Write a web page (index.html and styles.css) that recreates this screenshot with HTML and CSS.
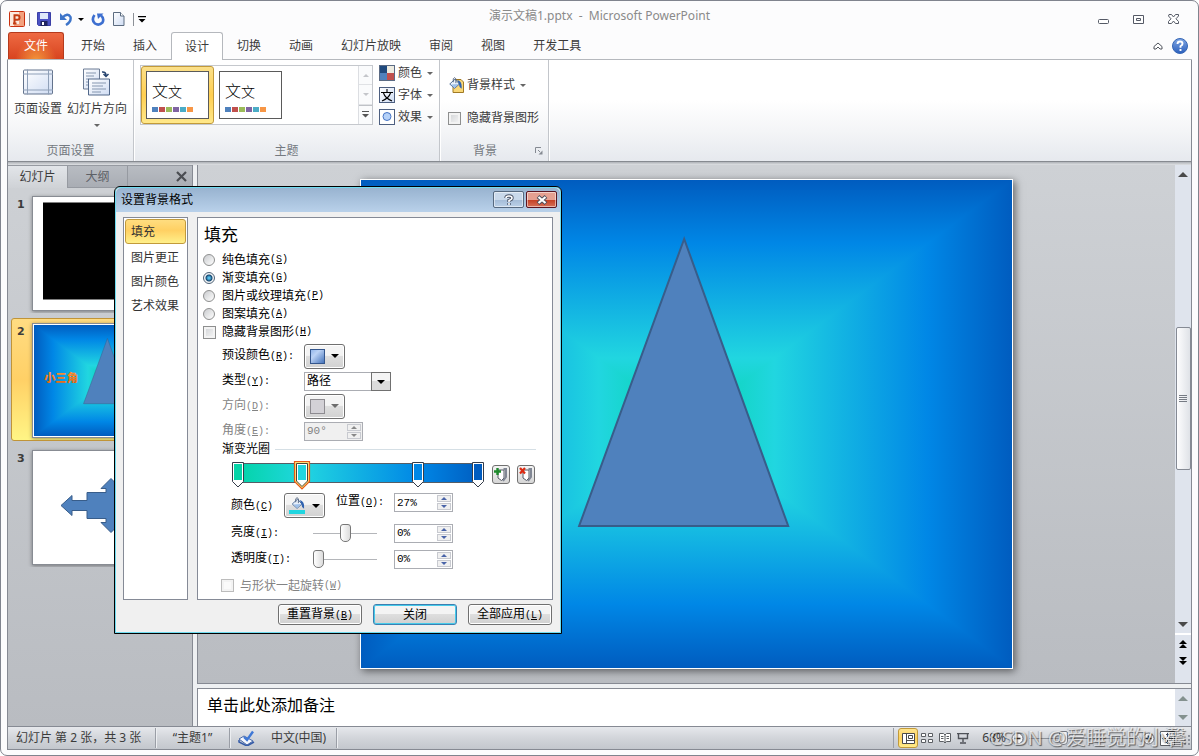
FILE: index.html
```html
<!DOCTYPE html>
<html lang="zh-CN">
<head>
<meta charset="utf-8">
<title>演示文稿1.pptx - Microsoft PowerPoint</title>
<link rel="stylesheet" href="styles.css">
</head>
<body>
<svg class="defs" width="0" height="0" aria-hidden="true">
  <defs>
    <linearGradient id="gh" x1="0" x2="1" y1="0" y2="0">
      <stop offset="0" stop-color="#005cbf"/><stop offset=".13" stop-color="#0087e6"/><stop offset=".365" stop-color="#21d6e0"/><stop offset=".5" stop-color="#03d4a8"/><stop offset=".635" stop-color="#21d6e0"/><stop offset=".87" stop-color="#0087e6"/><stop offset="1" stop-color="#005cbf"/>
    </linearGradient>
    <linearGradient id="gv" x1="0" x2="0" y1="0" y2="1">
      <stop offset="0" stop-color="#005cbf"/><stop offset=".13" stop-color="#0087e6"/><stop offset=".365" stop-color="#21d6e0"/><stop offset=".5" stop-color="#03d4a8"/><stop offset=".635" stop-color="#21d6e0"/><stop offset=".87" stop-color="#0087e6"/><stop offset="1" stop-color="#005cbf"/>
    </linearGradient>
    <linearGradient id="word" x1="0" x2="0" y1="0" y2="1"><stop offset="0" stop-color="#ff9a3c"/><stop offset="1" stop-color="#e4600a"/></linearGradient>
    <linearGradient id="page" x1="0" x2="1" y1="0" y2="1"><stop offset="0" stop-color="#fff"/><stop offset="1" stop-color="#cfdcf3"/></linearGradient>
    <linearGradient id="ball" x1="0" x2="0" y1="0" y2="1"><stop offset="0" stop-color="#7fa6e3"/><stop offset="1" stop-color="#2b5fbd"/></linearGradient>
    <linearGradient id="swatch" x1="0" x2="1" y1="0" y2="1"><stop offset="0" stop-color="#8fb4ea"/><stop offset=".35" stop-color="#bcd3f5"/><stop offset="1" stop-color="#3f6fb8"/></linearGradient>
    <linearGradient id="ramp" x1="0" x2="1" y1="0" y2="0"><stop offset="0" stop-color="#03d4a8"/><stop offset=".27" stop-color="#21d6e0"/><stop offset=".74" stop-color="#0087e6"/><stop offset="1" stop-color="#005cbf"/></linearGradient>
    <symbol id="slide-two" viewBox="0 0 651 488">
      <rect width="651" height="488" fill="url(#gv)"/>
      <path d="M0 0L651 488V0L0 488Z" fill="url(#gh)"/>
      <text x="44" y="252" class="wordart" fill="url(#word)">小三角</text>
      <path d="M323 59L218 346H427Z" fill="#4f81bd" stroke="#385d8a" stroke-width="2"/>
    </symbol>
    <symbol id="bucket" viewBox="0 0 16 16">
      <path d="M2 8L8 2.500L13 8L7.500 13Z" fill="#e9f1fb" stroke="#3f6291"/>
      <path d="M3.500 8.500L12 8L7.500 12.500Z" fill="#9ec0ea"/>
      <path d="M6 6V2Q7.500 -.5 9 2V7" fill="none" stroke="#4c5d78"/>
      <path d="M10.500 3.500Q16.500 4.500 15.500 13.500Q12.500 12 12.500 8Z" fill="#2f62b0"/>
    </symbol>
  </defs>
</svg>

<div class="window">
  <header class="titlebar">
    <div class="quick">
      <svg class="app" width="16" height="16" viewBox="0 0 16 16"><rect x=".5" y=".5" width="15" height="15" rx="1" fill="#fde9de" stroke="#c9300f"/><path d="M10 1h5v14H5v-2h5z" fill="#f3a27f"/><path d="M5.500 13V4.200H8.500Q10.500 4.200 10.500 6.500T8.500 8.800H5.500M4 12.500H7.500" fill="none" stroke="#c43c12" stroke-width="2"/></svg>
      <span class="rule"></span>
      <button aria-label="保存"><svg width="14" height="14" viewBox="0 0 14 14"><path d="M.5 .5H13.500V13.500H1.500L.5 12.500Z" fill="#4b52c4" stroke="#3a3fa6"/><path d="M3 1h8v6H3z" fill="#dfe9fa"/><path d="M3.500 9h7v5h-7z" fill="#20245e"/><path d="M5 10h2v3H5z" fill="#fff"/></svg></button>
      <button class="undo" aria-label="撤消"><svg width="14" height="14" viewBox="0 0 14 14"><path d="M3 6Q9 0 11.500 5Q12.500 9.500 7 13" fill="none" stroke="#3d74c9" stroke-width="2.400"/><path d="M1 1V8H8Z" fill="#3d74c9"/></svg><i class="tri ink"></i></button>
      <button class="redo" aria-label="重复"><svg width="14" height="14" viewBox="0 0 14 14"><path d="M3.500 3Q0 8 4 11.500Q8 14 11.500 10.500Q13.500 6.500 10 3.500" fill="none" stroke="#3d6fd0" stroke-width="2.600"/><path d="M6 1.500H12.500L7 7Z" fill="#3d6fd0"/></svg></button>
      <button class="new" aria-label="新建"><svg width="12" height="14" viewBox="0 0 12 14"><path d="M.5 .5H7.500L11 4V13.500H.5Z" fill="url(#page)" stroke="#5c6c80"/><path d="M7.500 .5V4H11" fill="#fff" stroke="#5c6c80"/></svg></button>
      <span class="rule last"></span>
      <button class="more" aria-label="自定义快速访问工具栏"><svg width="8" height="7" viewBox="0 0 8 7"><path d="M0 0H8V1.200H0ZM.5 3H7.500L4 6.500Z" fill="#000"/></svg></button>
    </div>
    <h1 class="caption">演示文稿1.pptx&nbsp; -&nbsp; Microsoft PowerPoint</h1>
    <div class="controls">
      <button aria-label="最小化"><svg width="12" height="12" viewBox="0 0 12 12"><rect x=".5" y="6.500" width="10" height="4" rx="1" fill="#fff" stroke="#555a66"/></svg></button>
      <button aria-label="还原"><svg width="12" height="12" viewBox="0 0 12 12"><path d="M.5 2.500H10.500V10.500H.5ZM3.500 5.500V7.500H7.500V5.500Z" fill="#fff" stroke="#555a66"/></svg></button>
      <button aria-label="关闭"><svg width="12" height="12" viewBox="0 0 12 12"><path d="M1 1.500H3.500L5.500 4L7.500 1.500H10.500V3L8 5.800L10.500 8.500V10.500H7.500L5.500 8L3.500 10.500H.5V8.500L3 5.800L.5 3Z" fill="#fff" stroke="#555a66"/></svg></button>
    </div>
  </header>

  <nav class="tabs">
    <button class="tab file">文件</button>
    <button class="tab">开始</button><button class="tab">插入</button><button class="tab active">设计</button><button class="tab">切换</button><button class="tab">动画</button><button class="tab">幻灯片放映</button><button class="tab">审阅</button><button class="tab">视图</button><button class="tab">开发工具</button>
    <div class="tabs-end">
      <button aria-label="功能区最小化"><svg width="10" height="8" viewBox="0 0 10 8"><path d="M5 1L9 4.500V7H7L5 5L3 7H1V4.500Z" fill="#fff" stroke="#4e535c"/></svg></button>
      <button aria-label="帮助"><svg width="16" height="16" viewBox="0 0 16 16"><circle cx="8" cy="8" r="7.500" fill="url(#ball)" stroke="#3566b5"/><path d="M5.500 6Q5.500 3.500 8 3.500T10.500 5.800Q10.500 7 8.500 8.200V9.700M8.500 11V13" fill="none" stroke="#fff" stroke-width="1.900"/></svg></button>
    </div>
  </nav>

  <main class="body">
    <section class="ribbon">
      <div class="group setup">
        <div class="group-main">
          <button class="big"><svg width="32" height="27" viewBox="0 0 32 27"><rect x="1.500" y="1.500" width="29" height="24" rx="1" fill="url(#page)" stroke="#63738c"/><path d="M5.500 1V26M26.500 1V26M1 5.500H31M1 21.500H31" stroke="#8fa0b8"/></svg><span>页面设置</span></button>
          <button class="big"><svg width="30" height="29" viewBox="0 0 30 29"><path d="M1.500 1.500H17.500V21.500H1.500Z" fill="url(#page)" stroke="#6b7b94"/><path d="M4 5.500H14M4 8.500H12M4 11.500H7M4 14.500H7M4 17.500H7" stroke="#8697b0"/><path d="M6.500 11.500H27.500V27.500H6.500Z" fill="url(#page)" stroke="#52688a"/><path d="M10 15.500H24M10 18.500H21M10 21.500H24M10 24.500H19" stroke="#8697b0"/><path d="M20 4.500Q24 4 24 8M21.500 6.500L24 9L26.500 6.500" fill="none" stroke="#27446f" stroke-width="1.500"/></svg><span>幻灯片方向</span><i class="tri"></i></button>
        </div>
        <p class="group-name">页面设置</p>
      </div>
      <div class="group themes">
        <div class="group-main">
          <div class="gallery">
            <button class="theme chosen" aria-label="主题1"><span class="card"><span class="sample"><b>文</b><small>文</small></span><span class="chips"><i class="c1"></i><i class="c2"></i><i class="c3"></i><i class="c4"></i><i class="c5"></i><i class="c6"></i></span></span></button>
            <button class="theme" aria-label="Office 主题"><span class="card"><span class="sample"><b>文</b><small>文</small></span><span class="chips"><i class="c1"></i><i class="c2"></i><i class="c3"></i><i class="c4"></i><i class="c5"></i><i class="c6"></i></span></span></button>
            <div class="gallery-nav">
              <button disabled aria-label="上一行"><i class="tri up pale"></i></button>
              <button disabled aria-label="下一行"><i class="tri pale"></i></button>
              <button aria-label="更多"><svg width="7" height="7" viewBox="0 0 7 7"><path d="M0 0H7V1H0ZM0 3H7L3.500 6.500Z" fill="#555"/></svg></button>
            </div>
          </div>
          <div class="stack">
            <button class="small"><svg width="16" height="16" viewBox="0 0 16 16"><path d="M0 0h16v16H0z" fill="#5b6b84"/><path d="M1 1h7v7H1z" fill="#1f497d"/><path d="M8 1h7v7H8z" fill="#eeece1"/><path d="M1 8h7v7H1z" fill="#4f81bd"/><path d="M8 8h7v7H8z" fill="#c0504d"/></svg>颜色<i class="tri"></i></button>
            <button class="small"><svg width="16" height="16" viewBox="0 0 16 16"><rect x=".5" y=".5" width="15" height="15" fill="url(#page)" stroke="#4d5f80"/><path d="M8 2V5M2 5.500H14M4.500 6Q6 11 13 14M11.500 6Q10 11 3 14" fill="none" stroke="#000" stroke-width="1.100"/></svg>字体<i class="tri"></i></button>
            <button class="small"><svg width="16" height="16" viewBox="0 0 16 16"><rect x=".5" y=".5" width="15" height="15" fill="#fff" stroke="#4d5f80"/><circle cx="8" cy="7.500" r="4" fill="#b5d1f8" stroke="#4774c4"/></svg>效果<i class="tri"></i></button>
          </div>
        </div>
        <p class="group-name">主题</p>
      </div>
      <div class="group backdrop">
        <div class="group-main">
          <button class="small"><svg width="16" height="16" viewBox="0 0 16 16"><path d="M7 2.500H13L15.500 5V15.500H5V10" fill="#f9d777" stroke="#a07a25"/><use href="#bucket" width="14" height="14"/></svg>背景样式<i class="tri"></i></button>
          <label class="small"><input type="checkbox" class="tick">隐藏背景图形</label>
        </div>
        <p class="group-name">背景<svg class="launcher" width="8" height="8" viewBox="0 0 8 8"><path d="M.5 6V.5H6M3 3L5 5" fill="none" stroke="#858a92"/><path d="M3.500 7.500H7.500V3.500Z" fill="#858a92"/></svg></p>
      </div>
    </section>

    <section class="work">
      <aside class="pane">
        <div class="pane-tabs"><button class="on">幻灯片</button><button>大纲</button><button class="shut" aria-label="关闭窗格"><svg width="11" height="11" viewBox="0 0 11 11"><path d="M1 1L10 10M10 1L1 10" stroke="#4a4d52" stroke-width="2.200"/></svg></button></div>
        <ol class="thumbs">
          <li><span>1</span><div class="thumb"><svg viewBox="0 0 150 112"><path fill="#fff" d="M0 0h150v112H0z"/><path d="M10 5h130v97H10z"/></svg></div></li>
          <li class="current"><span>2</span><div class="thumb"><svg viewBox="0 0 651 488"><use href="#slide-two"/></svg></div></li>
          <li><span>3</span><div class="thumb"><svg viewBox="0 0 150 112"><path fill="#fff" d="M0 0h150v112H0z"/><path d="M28 54L39 44V49H54V41H73V37H68L78 27L88 37H83V41H102V49H117V44L128 54L117 64V59H102V67H83V71H88L78 81L68 71H73V67H54V59H39V64Z" fill="#4f81bd" stroke="#385d8a"/></svg></div></li>
        </ol>
      </aside>
      <div class="editor">
        <div class="stage">
          <div class="canvas"><div class="slide"><svg viewBox="0 0 651 488" preserveAspectRatio="none"><use href="#slide-two"/></svg></div></div>
          <div class="vscroll">
            <button aria-label="向上滚动"><i class="tri up big-tri"></i></button>
            <div class="track"><div class="handle"><i></i><i></i><i></i><i></i></div></div>
            <button aria-label="向下滚动"><i class="tri big-tri"></i></button>
            <div class="jump">
              <button aria-label="上一张幻灯片"><i class="tri up black"></i><i class="tri up black"></i></button>
              <button aria-label="下一张幻灯片"><i class="tri black"></i><i class="tri black"></i></button>
            </div>
          </div>
        </div>
        <div class="notes">
          <p>单击此处添加备注</p>
          <div class="vscroll"><button aria-label="备注向上"><i class="tri up gray"></i></button><button aria-label="备注向下"><i class="tri gray"></i></button></div>
        </div>
      </div>
    </section>

    <footer class="status">
      <span class="cell pages">幻灯片 第 2 张，共 3 张</span>
      <span class="cell theme-name">“主题1”</span>
      <span class="cell lang"><svg width="18" height="16" viewBox="0 0 18 16"><path d="M1 9L6 6L15 11L9 15Z" fill="#f4f7fd" stroke="#4768a8"/><path d="M1 10V12L9 16L16 12" fill="none" stroke="#345ba8" stroke-width="1.500"/><path d="M6 7L9 10L15 1.500" fill="none" stroke="#3f78d6" stroke-width="2.400"/></svg>中文(中国)</span>
      <div class="views">
        <button class="picked" aria-label="普通视图"><svg width="13" height="11" viewBox="0 0 13 11"><path d="M.5 .5H12.500V10.500H.5ZM4.500 .5V10.500M4.500 7.500H12.500" fill="#fff" stroke="#4a4a4a"/><path d="M6.500 2.500H10.500V5.500H6.500Z" fill="none" stroke="#4a4a4a"/></svg></button>
        <button aria-label="幻灯片浏览"><svg width="12" height="10" viewBox="0 0 12 10"><path d="M.5 .5h4v3h-4zM7.500 .5h4v3h-4zM.5 6.500h4v3h-4zM7.500 6.500h4v3h-4z" fill="#fff" stroke="#5b5e63"/></svg></button>
        <button aria-label="阅读视图"><svg width="12" height="11" viewBox="0 0 12 11"><path d="M.5 .5H4.500L6 2L7.500 .5H11.500V8.500H7.500L6 10L4.500 8.500H.5ZM6 2V10M2 3.500H4.500M2 5.500H4.500M7.500 3.500H10M7.500 5.500H10" fill="#fff" stroke="#5b5e63"/></svg></button>
        <button aria-label="幻灯片放映"><svg width="12" height="11" viewBox="0 0 12 11"><path d="M0 .5H12M1.500 1V5.500H10.500V1M6 6V9M3 10H9" fill="none" stroke="#4f5258" stroke-width="1.400"/></svg></button>
      </div>
      <div class="zoom">
        <span>68%</span>
        <button aria-label="缩小"><svg width="13" height="13" viewBox="0 0 13 13"><circle cx="6.500" cy="6.500" r="5.500" fill="#f5f6f8" stroke="#6a6e75"/><path d="M3.500 6.500H9.500" stroke="#333" stroke-width="1.500"/></svg></button>
        <input type="range" class="zoombar" aria-label="显示比例" min="10" max="200" value="68">
        <button aria-label="放大"><svg width="13" height="13" viewBox="0 0 13 13"><circle cx="6.500" cy="6.500" r="5.500" fill="#f5f6f8" stroke="#6a6e75"/><path d="M3.500 6.500H9.500M6.500 3.500V9.500" stroke="#333" stroke-width="1.700"/></svg></button>
        <button class="fit" aria-label="适应窗口"><svg width="15" height="15" viewBox="0 0 15 15"><path d="M.5 .5H14.500V14.500H.5Z" fill="#fff" stroke="#5b5e63"/><path d="M7.500 2V6M7.500 9V13M2 7.500H6M9 7.500H13M6 3.500H9M6 11.500H9M3.500 6V9M11.500 6V9" stroke="#44474d"/></svg></button>
        <svg class="grip" width="11" height="11" viewBox="0 0 11 11"><path d="M8 0h2v2H8zM4 4h2v2H4zM8 4h2v2H8zM0 8h2v2H0zM4 8h2v2H4zM8 8h2v2H8z" fill="#8d929c"/></svg>
      </div>
      <span class="watermark">CSDN @爱睡觉的小馨</span>
    </footer>
  </main>

  <form class="dialog" role="dialog" aria-labelledby="dlg">
    <div class="dialog-title">
      <h2 id="dlg">设置背景格式</h2>
      <button type="button" class="cap" aria-label="帮助"><svg width="10" height="12" viewBox="0 0 10 12"><path d="M2 4Q2 2 5 2T8 4Q8 5.500 5 6.500V8M5 9V11" fill="none" stroke="#4a5468" stroke-width="3.400"/><path d="M2 4Q2 2 5 2T8 4Q8 5.500 5 6.500V8M5 9V11" fill="none" stroke="#fff" stroke-width="1.600"/></svg></button>
      <button type="button" class="cap red" aria-label="关闭"><svg width="12" height="10" viewBox="0 0 12 10"><path d="M2 1.500L10 8.500M10 1.500L2 8.500" stroke="#4d4f5c" stroke-width="4"/><path d="M2.500 2L9.500 8M9.500 2L2.500 8" stroke="#fff" stroke-width="2.200"/></svg></button>
    </div>
    <div class="dialog-body">
      <nav class="side">
        <button type="button" class="on">填充</button><button type="button">图片更正</button><button type="button">图片颜色</button><button type="button">艺术效果</button>
      </nav>
      <div class="panel">
        <h3>填充</h3>
        <label class="option"><input type="radio" name="fill">纯色填充<kbd>(<u>S</u>)</kbd></label>
        <label class="option"><input type="radio" name="fill" checked>渐变填充<kbd>(<u>G</u>)</kbd></label>
        <label class="option"><input type="radio" name="fill">图片或纹理填充<kbd>(<u>P</u>)</kbd></label>
        <label class="option"><input type="radio" name="fill">图案填充<kbd>(<u>A</u>)</kbd></label>
        <label class="option"><input type="checkbox" class="tick">隐藏背景图形<kbd>(<u>H</u>)</kbd></label>
        <div class="field tall"><label for="preset">预设颜色<kbd>(<u>R</u>):</kbd></label><button type="button" id="preset" class="drop"><svg width="15" height="15" viewBox="0 0 15 15"><rect x=".5" y=".5" width="14" height="14" fill="url(#swatch)" stroke="#34568c"/></svg><i class="tri dark"></i></button></div>
        <div class="field mid"><label for="kind">类型<kbd>(<u>Y</u>):</kbd></label><span class="combo"><select id="kind"><option>路径</option></select><i class="combo-arrow"></i></span></div>
        <div class="field tall off"><label for="dir">方向<kbd>(<u>D</u>):</kbd></label><button type="button" id="dir" class="drop" disabled><svg width="15" height="15" viewBox="0 0 15 15"><rect x=".5" y=".5" width="14" height="14" fill="#d3d1d6" stroke="#8d8b90"/></svg><i class="tri dark"></i></button></div>
        <div class="field low off"><label for="angle">角度<kbd>(<u>E</u>):</kbd></label><span class="spin"><input id="angle" type="text" value="90°" disabled><span class="ud"><i></i><i></i></span></span></div>
        <div class="legend">渐变光圈</div>
        <div class="stops">
          <svg width="254" height="30" viewBox="0 0 254 30">
            <path d="M7 2.500H251V21.500H7Z" fill="url(#ramp)" stroke="#555d66"/>
            <g fill="#fff" stroke="#343c4a"><path d="M1.500 1.500H12.500V20.500L7 26L1.500 20.500Z"/><path d="M181.500 1.500H192.500V20.500L187 26L181.500 20.500Z"/><path d="M241.500 1.500H252.500V20.500L247 26L241.500 20.500Z"/></g>
            <path d="M63.500 .5H78.500V20.500L71 28L63.500 20.500Z" fill="#ffe07a" stroke="#e85a17" stroke-width="1.200"/><path d="M65.500 2.500H76.500V20L71 25.500L65.500 20Z" fill="#fff" stroke="#4d4432"/>
            <path d="M3 3h8v16H3z" fill="#03d4a8"/><path d="M67 4h8v15h-8z" fill="#21d6e0"/><path d="M183 3h8v16h-8z" fill="#0087e6"/><path d="M243 3h8v16h-8z" fill="#005cbf"/>
          </svg>
          <button type="button" class="mini" aria-label="添加渐变光圈"><svg width="16" height="16" viewBox="0 0 16 16"><path d="M5 3H11V11L8.500 13.500L5 11Z" fill="#fff" stroke="#555b66"/><path d="M10.500 2H13V10L10 14" fill="none" stroke="#818794" stroke-width="2"/><path d="M4.500 1V8M1 4.500H8" stroke="#1f8a2d" stroke-width="2.400"/></svg></button>
          <button type="button" class="mini" aria-label="删除渐变光圈"><svg width="16" height="16" viewBox="0 0 16 16"><path d="M5 3H11V11L8.500 13.500L5 11Z" fill="#fff" stroke="#555b66"/><path d="M10.500 2H13V10L10 14" fill="none" stroke="#818794" stroke-width="2"/><path d="M2 1L7 6.500M7 1L2 6.500" stroke="#dc2a12" stroke-width="2.200"/></svg></button>
        </div>
        <div class="row first"><label for="tint">颜色<kbd>(<u>C</u>)</kbd></label><button type="button" id="tint" class="drop"><svg width="17" height="17" viewBox="0 0 17 17"><use href="#bucket" width="17" height="14"/><path d="M0 13h16v4H0z" fill="#21d6e0"/></svg><i class="tri dark"></i></button><label class="pos" for="pos">位置<kbd>(<u>O</u>):</kbd></label><span class="spin"><input id="pos" type="text" value="27%"><span class="ud"><i></i><i></i></span></span></div>
        <div class="row"><label for="light">亮度<kbd>(<u>I</u>):</kbd></label><input type="range" class="slider" aria-label="亮度滑块" min="-100" max="100" value="0"><span class="spin"><input id="light" type="text" value="0%"><span class="ud"><i></i><i></i></span></span></div>
        <div class="row"><label for="clear">透明度<kbd>(<u>T</u>):</kbd></label><input type="range" class="slider" aria-label="透明度滑块" value="0"><span class="spin"><input id="clear" type="text" value="0%"><span class="ud"><i></i><i></i></span></span></div>
        <label class="option rotate"><input type="checkbox" class="tick" disabled>与形状一起旋转<kbd>(<u>W</u>)</kbd></label>
      </div>
    </div>
    <div class="actions"><button type="button">重置背景<kbd>(<u>B</u>)</kbd></button><button type="button" class="default">关闭</button><button type="button">全部应用<kbd>(<u>L</u>)</kbd></button></div>
  </form>
</div>
</body>
</html>
```
FILE: styles.css
```css
* { box-sizing: border-box; }
body {
  margin: 0;
  height: 100vh;
  background: #fff;
  color: #3b3b3b;
  font: 12px/16px "Noto Sans", "Noto Sans CJK SC", sans-serif;
}
button, input, select { font: inherit; color: inherit; margin: 0; }
button { padding: 0; border: 0; background: none; white-space: nowrap; }
h1, h2, h3, p, ol { margin: 0; padding: 0; font-weight: normal; }
svg { display: block; flex: none; }
kbd { font: 10px/16px "Liberation Mono", monospace; }
.defs { position: absolute; }

.tri {
  display: block;
  flex: none;
  border: 3px solid transparent;
  border-top-color: #666;
  border-bottom: 0;
}
.tri.up { border-top: 0; border-bottom: 3px solid #666; }
.tri.ink { border-top-color: #000; }
.tri.dark { border-width: 4px 4px 0; border-top-color: #000; }
.off .tri.dark { border-top-color: #6d6d6d; }
.tri.pale { border-top-color: #c4c6ca; }
.tri.up.pale { border-bottom-color: #c4c6ca; }
.tri.big-tri { border-width: 5px 5px 0; border-top-color: #4a4a4a; }
.tri.up.big-tri { border-width: 0 5px 5px; border-bottom-color: #4a4a4a; }
.tri.black { border-width: 4px 4px 0; border-top-color: #000; }
.tri.up.black { border-width: 0 4px 4px; border-bottom-color: #000; }
.tri.gray { border-width: 5px 5px 0; border-top-color: #84918f; }
.tri.up.gray { border-width: 0 5px 5px; border-bottom-color: #84918f; }

.window {
  position: relative;
  height: 100%;
  display: flex;
  flex-direction: column;
  padding: 0 6px 5px;
  border: 1px solid #80848e;
  border-radius: 7px;
  background: #fcfcfd;
}

/* title bar */
.titlebar { display: grid; grid-template-columns: 1fr auto 1fr; height: 31px; }
.quick { display: flex; align-items: center; padding: 5px 0 0 2px; }
.rule { width: 1px; height: 13px; margin: 0 7px 0 4px; background: #8c9097; }
.undo { display: flex; align-items: center; gap: 5px; margin-left: 8px; }
.redo { margin-left: 7px; }
.new { margin-left: 8px; }
.rule.last { margin: 0 4px 0 8px; }
.caption { padding-top: 7px; color: #8a8a8a; font-size: 12px; line-height: 16px; }
.controls { display: flex; justify-content: flex-end; gap: 23px; padding: 12px 12px 0 0; align-items: flex-start; }

/* ribbon tabs */
.tabs { display: flex; height: 28px; padding-left: 1px; border-bottom: 1px solid #b5b8bd; }
.tab { height: 27px; padding: 0 14px; }
.tab.file {
  width: 56px;
  margin-right: 3px;
  border: 1px solid #b53a1d;
  border-bottom: 0;
  border-radius: 3px 3px 0 0;
  background: radial-gradient(ellipse at 50% 110%, #f59a3c 0, transparent 55%), linear-gradient(#ee6a43, #d8441f);
  color: #fff;
}
.tab.active {
  height: 28px;
  padding: 0 13px;
  border: 1px solid #b5b8bd;
  border-bottom: 0;
  border-radius: 3px 3px 0 0;
  background: #fff;
}
.tabs-end { display: flex; align-items: center; gap: 9px; margin-left: auto; padding-right: 4px; }

.body {
  flex: 1;
  min-height: 0;
  display: flex;
  flex-direction: column;
  border: 1px solid #868a93;
  border-top: 0;
}

/* ribbon */
.ribbon {
  display: flex;
  height: 102px;
  border-bottom: 1px solid #868a90;
  background: linear-gradient(#fff 40%, #f4f5f7 70%, #e6e9ee);
}
.group {
  display: flex;
  flex-direction: column;
  border-right: 1px solid #c3c6cb;
  box-shadow: 1px 0 #fff;
}
.group-main { display: flex; flex: 1; }
.group-name { position: relative; height: 18px; text-align: center; color: #747980; }
.launcher { position: absolute; right: 5px; top: 4px; }
.setup { width: 126px; }
.setup .group-main { padding: 6px 6px 0; justify-content: space-between; }
.big { display: flex; flex-direction: column; align-items: center; }
.big svg { height: 35px; padding-bottom: 3px; }
.big .tri { margin-top: 7px; }
.themes { width: 306px; }
.themes .group-main { padding: 5px 0 0 6px; }
.gallery {
  display: flex;
  align-items: flex-start;
  width: 233px;
  height: 60px;
  border: 1px solid #c5c8cd;
  background: #fff;
}
.theme { padding: 4px; border: 1px solid transparent; }
.theme.chosen { border-color: #c29a3a; border-radius: 3px; background: linear-gradient(#fbe08a, #ffcf52 50%, #ffe88a); }
.card { display: block; width: 63px; height: 48px; padding: 9px 5px 0; border: 1px solid #5a5a5a; background: #fff; text-align: left; }
.sample { display: flex; align-items: baseline; height: 21px; color: #000; line-height: 20px; }
.sample b { font-size: 16px; font-weight: 300; }
.sample small { font-size: 14px; font-weight: 300; }
.chips { display: flex; gap: 1px; margin-top: 5px; }
.chips i { width: 6px; height: 5px; }
.c1 { background: #4f81bd; }
.c2 { background: #c0504d; }
.c3 { background: #9bbb59; }
.c4 { background: #8064a2; }
.c5 { background: #4bacc6; }
.c6 { background: #f79646; }
.gallery-nav { display: grid; grid-template-rows: 1fr 1fr 1fr; width: 14px; height: 58px; margin-left: auto; border-left: 1px solid #dcdee2; }
.gallery-nav button { display: grid; place-items: center; background: #fafbfc; border-bottom: 1px solid #e0e2e5; }
.gallery-nav button:last-child { border: 0; border-top: 1px solid #bfc2c7; }
.stack { display: flex; flex-direction: column; gap: 6px; padding-left: 6px; }
.small { display: flex; align-items: center; height: 16px; gap: 3px; }
.small .tri { margin-left: 2px; }
.backdrop { width: 109px; }
.backdrop .group-main { flex-direction: column; gap: 17px; padding: 17px 0 0 8px; }
.backdrop .group-name { padding-right: 18px; }
.backdrop label { gap: 6px; white-space: nowrap; }

.tick {
  appearance: none;
  flex: none;
  width: 13px;
  height: 13px;
  border: 1px solid #8e8f8f;
  background: linear-gradient(135deg, #cfd1d4, #f8f8f8);
  box-shadow: inset 0 0 0 2px #f3f3f3;
}
.tick:disabled { border-color: #bcbcbc; background: #fafafa; }

/* work area */
.work { flex: 1; min-height: 0; display: flex; gap: 5px; padding-top: 3px; background: linear-gradient(#aeb2b7, #dfe1e4 3px, #eef0f2 4px); }
.pane { width: 185px; display: flex; flex-direction: column; border-right: 1px solid #868a93; background: linear-gradient(#ced1d5, #b9bcc1); }
.work .pane + .editor { margin-left: -1px; }
.pane-tabs { display: flex; height: 23px; border-top: 1px solid #969aa1; }
.pane-tabs button { width: 60px; border: 1px solid #969aa1; border-width: 0 1px 1px 0; background: linear-gradient(#b8bcc2, #a9adb4); color: #5d6066; }
.pane-tabs .on { border-bottom: 0; background: linear-gradient(#e2e5e9, #cfd2d6); color: #3b3b3b; }
.pane-tabs .shut { flex: 1; display: flex; justify-content: flex-end; align-items: center; padding-right: 5px; border-right: 0; }
.thumbs { list-style: none; display: flex; flex-direction: column; gap: 4px; padding: 3px 3px 0; }
.thumbs li { display: flex; height: 123px; padding-top: 4px; border: 1px solid transparent; border-radius: 3px; overflow: hidden; }
.thumbs span { flex: none; width: 20px; padding: 1px 0 0 5px; font: bold 11px/16px "DejaVu Sans", sans-serif; }
.thumbs .current { border-color: #c09438; background: linear-gradient(#ffdc82, #ffd066 50%, #fff585); }
.thumb { flex: none; width: 152px; height: 115px; border: 1px solid #888c93; background: #fff; box-shadow: 0 1px 4px #0006; }
.current .thumb { padding: 1px 0; }
.thumb svg, .slide svg { width: 100%; height: 100%; }
.wordart { font: 900 50px "Noto Sans CJK SC", sans-serif; }

.editor { flex: 1; display: flex; flex-direction: column; gap: 4px; min-width: 0; }
.stage { flex: 1; min-height: 0; display: flex; border: 1px solid #868a93; border-width: 0 0 1px 1px; background: linear-gradient(#ced1d5, #b9bcc1); }
.canvas { flex: 1; display: grid; place-items: center; min-width: 0; }
.slide { height: calc(100% - 28px); aspect-ratio: 4 / 3; border: 1px solid #fff; box-shadow: 2px 2px 8px #0008; }
.vscroll { width: 16px; display: flex; flex-direction: column; background: #dfe4ed; }
.vscroll button { display: flex; flex-direction: column; align-items: center; justify-content: center; height: 18px; }
.track { flex: 1; display: flex; justify-content: center; }
.handle {
  width: 15px;
  height: 33%;
  margin-top: 144px;
  display: flex;
  flex-direction: column;
  align-items: center;
  justify-content: center;
  gap: 1px;
  border: 1px solid #858a94;
  border-radius: 2px;
  background: linear-gradient(90deg, #fdfdfe, #dfe2e7);
}
.handle i { width: 8px; height: 1px; background: #767b84; }
.jump { border-top: 2px solid #fff; height: 50px; }
.jump button { width: 16px; height: 17px; }

.notes { display: flex; height: 38px; border: 1px solid #868a93; border-width: 1px 0 0 1px; background: #fff; }
.notes p { flex: 1; padding: 6px 9px; color: #000; font-size: 16px; line-height: 20px; }
.notes .vscroll { justify-content: space-between; }

/* status bar */
.status { position: relative; display: flex; height: 23px; align-items: center; border-top: 1px solid #868a93; background: linear-gradient(#e6e8ec, #d2d5da 50%, #c3c7cd); }
.cell { display: flex; align-items: center; height: 20px; border-right: 1px solid #9a9ea6; box-shadow: 1px 0 #eceef1; }
.pages { width: 148px; padding-left: 8px; white-space: nowrap; }
.theme-name { width: 74px; justify-content: center; }
.lang { width: 107px; padding-left: 8px; gap: 15px; }
.views { display: flex; align-items: center; margin-left: auto; height: 20px; padding-left: 4px; border-left: 1px solid #9a9ea6; }
.views button { display: grid; place-items: center; width: 18px; height: 20px; }
.views .picked { width: 20px; border: 1px solid #c29a3a; border-radius: 3px; background: linear-gradient(#ffe58e, #ffd25c, #ffec8c); }
.zoom { display: flex; align-items: center; gap: 5px; padding-left: 10px; }
.zoombar { appearance: none; width: 108px; height: 15px; background: linear-gradient(#8d929a, #8d929a) center / 100% 1px no-repeat; }
.zoombar::-webkit-slider-thumb { appearance: none; width: 9px; height: 14px; border: 1px solid #777b84; border-radius: 2px 2px 4px 4px; background: #f1f3f5; }
.grip { align-self: flex-end; }
.watermark { position: absolute; right: 5px; bottom: 0; color: #ffffffb0; font-size: 20px; line-height: 22px; text-shadow: 1px 1px 1px #0008, -1px 0 1px #0003; white-space: nowrap; }

/* format dialog */
.dialog {
  position: absolute;
  left: 113px;
  top: 185px;
  width: 448px;
  border: 1px solid #000;
  border-radius: 6px 6px 0 0;
  background: #f0f0f0;
  box-shadow: inset 0 0 0 1px #6fdcf0;
  color: #000;
}
.dialog-title { display: flex; height: 24px; padding: 3px 3px 0 5px; margin: 1px 1px 0; border-radius: 5px 5px 0 0; background: linear-gradient(#98b3d0, #b9d1ea); }
.dialog-title h2 { flex: 1; font-size: 12px; line-height: 18px; }
.cap { display: grid; place-items: center; width: 31px; height: 17px; margin-left: 2px; border: 1px solid #56697f; border-radius: 2px; background: linear-gradient(#c9d9eb 50%, #a3bbd6 50%, #bcd1e8); box-shadow: inset 0 0 0 1px #ffffff80; }
.cap.red { border-color: #5b1420; background: linear-gradient(#e5a091 50%, #c33c20 50%, #d67058); }
.dialog-body { display: flex; gap: 9px; padding: 5px 8px 0; }
.side { width: 65px; display: flex; flex-direction: column; padding: 1px; border: 1px solid #858a96; background: #fff; }
.side button { height: 24px; padding-left: 6px; text-align: left; color: #333; }
.side .on { height: 25px; margin-bottom: 2px; border: 1px solid #c29a3a; border-radius: 3px; padding-left: 5px; background: linear-gradient(#ffdd80, #ffd063 45%, #fff08a); }
.panel { flex: 1; padding-left: 5px; border: 1px solid #858a96; background: #fff; }
.panel h3 { padding-left: 1px; font-size: 17px; line-height: 33px; }
.option { display: flex; align-items: center; height: 18px; }
.option input { margin-right: 6px; }
.option [type="radio"] {
  appearance: none;
  width: 12px;
  height: 12px;
  margin-right: 7px;
  border: 1px solid #8e8f8f;
  border-radius: 50%;
  background: linear-gradient(135deg, #c9cbce, #fff);
}
.option [type="radio"]:checked { border-color: #4f6377; background: radial-gradient(circle, #53bce8 0 1px, #15466f 3px, #f2f4f6 4px); }
.field { display: flex; align-items: center; padding-left: 19px; }
.field label { width: 82px; white-space: nowrap; }
.tall { height: 30px; }
.mid { height: 20px; }
.low { height: 20px; }
.off { color: #838383; }
.drop {
  display: flex;
  align-items: center;
  justify-content: center;
  gap: 6px;
  width: 41px;
  height: 25px;
  border: 1px solid #707070;
  border-radius: 3px;
  background: linear-gradient(#f4f4f4 45%, #dedede 50%, #d2d2d2);
  box-shadow: inset 0 0 0 1px #fff;
}
.combo { position: relative; display: block; width: 87px; height: 19px; }
.combo select { appearance: none; width: 87px; height: 19px; padding: 0 2px; border: 1px solid #abadb3; border-radius: 0; background: #fff; color: #000; }
.combo-arrow { position: absolute; right: 0; top: 0; width: 20px; height: 19px; border: 1px solid #707070; background: linear-gradient(#f4f4f4 50%, #dcdcdc 50%); pointer-events: none; }
.combo-arrow::after { content: ""; position: absolute; left: 5px; top: 7px; border: 4px solid transparent; border-top-color: #000; border-bottom: 0; }
.spin { display: flex; width: 59px; height: 19px; border: 1px solid #abadb3; background: #fff; }
.spin input { flex: 1; min-width: 0; padding: 0 2px; border: 0; background: none; font: 11px/16px "Liberation Mono", monospace; }
.off .spin { background: #f0f0f0; }
.ud { display: grid; grid-template-rows: 1fr 1fr; gap: 1px; width: 16px; padding: 1px; }
.ud i { display: grid; place-items: center; border: 1px solid #c8cad0; background: #f0f0f0; }
.ud i::after { content: ""; border: 3px solid transparent; border-top-color: #4a64a8; border-bottom: 0; }
.ud i:first-child::after { border-bottom: 3px solid #4a64a8; border-top: 0; }
.off .ud i::after { border-top-color: #888; }
.off .ud i:first-child::after { border-bottom-color: #888; }
.legend { display: flex; align-items: center; gap: 5px; height: 16px; padding: 0 16px 0 19px; }
.legend::after { content: ""; flex: 1; height: 1px; background: #d5dfe5; }
.stops { display: flex; align-items: flex-start; gap: 7px; height: 34px; padding: 4px 0 0 28px; }
.mini { width: 18px; height: 19px; margin-top: 4px; border: 1px solid #707070; border-radius: 3px; background: linear-gradient(#f4f4f4, #d6d6d6); }
.row { display: flex; align-items: center; height: 26px; padding-left: 28px; }
.row label { width: 82px; white-space: nowrap; }
.row.first { height: 29px; }
.row.first label { width: 53px; }
.row.first .pos { width: 58px; margin-left: 11px; }
.row.first .pos, .row.first .spin { align-self: flex-start; margin-top: 2px; }
.slider { appearance: none; width: 64px; height: 20px; margin: 0 17px 0 0; background: linear-gradient(#b4b6ba, #b4b6ba) center / 64px 1px no-repeat; }
.slider::-webkit-slider-thumb { appearance: none; width: 11px; height: 18px; border: 1px solid #777; border-radius: 3px 3px 5px 5px; background: linear-gradient(90deg, #fff, #dcdcdc); }
.rotate { height: 27px; padding-left: 18px; color: #838383; }
.actions { display: flex; justify-content: flex-end; gap: 11px; padding: 4px 9px 8px; }
.actions button { width: 84px; height: 21px; border: 1px solid #707070; border-radius: 3px; background: linear-gradient(#f4f4f4 45%, #dedede 50%, #d0d0d0); box-shadow: inset 0 0 0 1px #fff; line-height: 16px; }
.actions .default { border-color: #3c7fb1; box-shadow: inset 0 0 0 1px #46cbea; }
```
